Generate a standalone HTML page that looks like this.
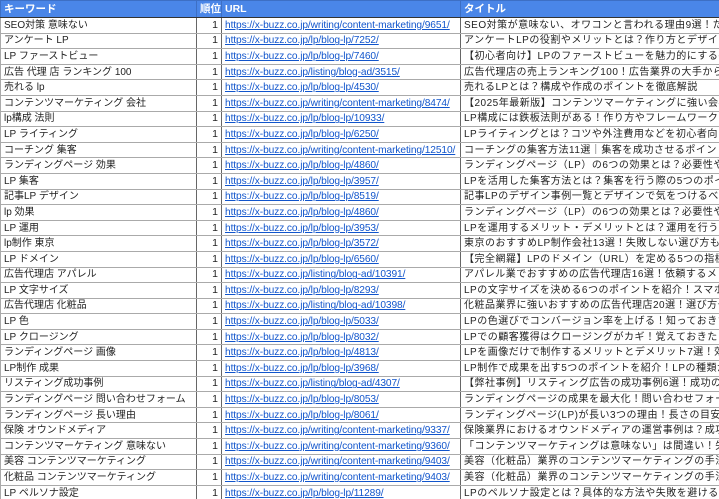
<!DOCTYPE html>
<html><head><meta charset="utf-8"><style>
html,body{margin:0;padding:0;width:719px;height:499px;overflow:hidden;background:#fff}
table{border-collapse:collapse;table-layout:fixed;width:719px;font-family:"Liberation Sans","Noto Sans CJK JP",sans-serif;font-size:10px;color:#222}
tr{height:15.6px}
tr:first-child{height:17px}
td,th{padding:0 3px;border:1px solid #aaa;white-space:nowrap;overflow:hidden;line-height:13px;vertical-align:middle}
th{background:#4a86e8;color:#fff;text-align:left;font-weight:bold;border-color:#3d6fc4;border-bottom:1px solid #333;font-size:10.5px}
td:nth-child(1){border-right:1px solid #666;font-size:10px}
td:nth-child(2){text-align:right;border-right:1px solid #666;font-size:10.5px}
td:nth-child(3){color:#1155cc;text-decoration:underline;font-size:10.2px;border-right:1px solid #666;letter-spacing:-0.1px}
td:nth-child(4){letter-spacing:0.5px;text-overflow:clip}
</style></head><body>
<table>
<colgroup><col style="width:196px"><col style="width:25px"><col style="width:239px"><col style="width:259px"></colgroup>
<tr><th>キーワード</th><th>順位</th><th>URL</th><th>タイトル</th></tr>
<tr><td>SEO対策 意味ない</td><td>1</td><td>https://x-buzz.co.jp/writing/content-marketing/9651/</td><td>SEO対策が意味ない、オワコンと言われる理由9選！ただし</td></tr>
<tr><td>アンケート LP</td><td>1</td><td>https://x-buzz.co.jp/lp/blog-lp/7252/</td><td>アンケートLPの役割やメリットとは？作り方とデザイン事例</td></tr>
<tr><td>LP ファーストビュー</td><td>1</td><td>https://x-buzz.co.jp/lp/blog-lp/7460/</td><td>【初心者向け】LPのファーストビューを魅力的にする6つの</td></tr>
<tr><td>広告 代理 店 ランキング 100</td><td>1</td><td>https://x-buzz.co.jp/listing/blog-ad/3515/</td><td>広告代理店の売上ランキング100！広告業界の大手から最新</td></tr>
<tr><td>売れる lp</td><td>1</td><td>https://x-buzz.co.jp/lp/blog-lp/4530/</td><td>売れるLPとは？構成や作成のポイントを徹底解説</td></tr>
<tr><td>コンテンツマーケティング 会社</td><td>1</td><td>https://x-buzz.co.jp/writing/content-marketing/8474/</td><td>【2025年最新版】コンテンツマーケティングに強い会社2</td></tr>
<tr><td>lp構成 法則</td><td>1</td><td>https://x-buzz.co.jp/lp/blog-lp/10933/</td><td>LP構成には鉄板法則がある！作り方やフレームワークを紹介</td></tr>
<tr><td>LP ライティング</td><td>1</td><td>https://x-buzz.co.jp/lp/blog-lp/6250/</td><td>LPライティングとは？コツや外注費用などを初心者向けに</td></tr>
<tr><td>コーチング 集客</td><td>1</td><td>https://x-buzz.co.jp/writing/content-marketing/12510/</td><td>コーチングの集客方法11選｜集客を成功させるポイントや</td></tr>
<tr><td>ランディングページ 効果</td><td>1</td><td>https://x-buzz.co.jp/lp/blog-lp/4860/</td><td>ランディングページ（LP）の6つの効果とは？必要性や作</td></tr>
<tr><td>LP 集客</td><td>1</td><td>https://x-buzz.co.jp/lp/blog-lp/3957/</td><td>LPを活用した集客方法とは？集客を行う際の5つのポイント</td></tr>
<tr><td>記事LP デザイン</td><td>1</td><td>https://x-buzz.co.jp/lp/blog-lp/8519/</td><td>記事LPのデザイン事例一覧とデザインで気をつけるべきこと</td></tr>
<tr><td>lp 効果</td><td>1</td><td>https://x-buzz.co.jp/lp/blog-lp/4860/</td><td>ランディングページ（LP）の6つの効果とは？必要性や作</td></tr>
<tr><td>LP 運用</td><td>1</td><td>https://x-buzz.co.jp/lp/blog-lp/3953/</td><td>LPを運用するメリット・デメリットとは？運用を行う際の</td></tr>
<tr><td>lp制作 東京</td><td>1</td><td>https://x-buzz.co.jp/lp/blog-lp/3572/</td><td>東京のおすすめLP制作会社13選！失敗しない選び方も</td></tr>
<tr><td>LP ドメイン</td><td>1</td><td>https://x-buzz.co.jp/lp/blog-lp/6560/</td><td>【完全網羅】LPのドメイン（URL）を定める5つの指標！</td></tr>
<tr><td>広告代理店 アパレル</td><td>1</td><td>https://x-buzz.co.jp/listing/blog-ad/10391/</td><td>アパレル業でおすすめの広告代理店16選！依頼するメリット</td></tr>
<tr><td>LP 文字サイズ</td><td>1</td><td>https://x-buzz.co.jp/lp/blog-lp/8293/</td><td>LPの文字サイズを決める6つのポイントを紹介！スマホ対応</td></tr>
<tr><td>広告代理店 化粧品</td><td>1</td><td>https://x-buzz.co.jp/listing/blog-ad/10398/</td><td>化粧品業界に強いおすすめの広告代理店20選！選び方や、</td></tr>
<tr><td>LP 色</td><td>1</td><td>https://x-buzz.co.jp/lp/blog-lp/5033/</td><td>LPの色選びでコンバージョン率を上げる！知っておきたい</td></tr>
<tr><td>LP クロージング</td><td>1</td><td>https://x-buzz.co.jp/lp/blog-lp/8032/</td><td>LPでの顧客獲得はクロージングがカギ！覚えておきたい</td></tr>
<tr><td>ランディングページ 画像</td><td>1</td><td>https://x-buzz.co.jp/lp/blog-lp/4813/</td><td>LPを画像だけで制作するメリットとデメリット7選！効果</td></tr>
<tr><td>LP制作 成果</td><td>1</td><td>https://x-buzz.co.jp/lp/blog-lp/3968/</td><td>LP制作で成果を出す5つのポイントを紹介！LPの種類から</td></tr>
<tr><td>リスティング成功事例</td><td>1</td><td>https://x-buzz.co.jp/listing/blog-ad/4307/</td><td>【弊社事例】リスティング広告の成功事例6選！成功の法則</td></tr>
<tr><td>ランディングページ 問い合わせフォーム</td><td>1</td><td>https://x-buzz.co.jp/lp/blog-lp/8053/</td><td>ランディングページの成果を最大化！問い合わせフォーム</td></tr>
<tr><td>ランディングページ 長い理由</td><td>1</td><td>https://x-buzz.co.jp/lp/blog-lp/8061/</td><td>ランディングページ(LP)が長い3つの理由！長さの目安や</td></tr>
<tr><td>保険 オウンドメディア</td><td>1</td><td>https://x-buzz.co.jp/writing/content-marketing/9337/</td><td>保険業界におけるオウンドメディアの運営事例は？成功</td></tr>
<tr><td>コンテンツマーケティング 意味ない</td><td>1</td><td>https://x-buzz.co.jp/writing/content-marketing/9360/</td><td>「コンテンツマーケティングは意味ない」は間違い！失敗</td></tr>
<tr><td>美容 コンテンツマーケティング</td><td>1</td><td>https://x-buzz.co.jp/writing/content-marketing/9403/</td><td>美容（化粧品）業界のコンテンツマーケティングの手法4</td></tr>
<tr><td>化粧品 コンテンツマーケティング</td><td>1</td><td>https://x-buzz.co.jp/writing/content-marketing/9403/</td><td>美容（化粧品）業界のコンテンツマーケティングの手法4</td></tr>
<tr><td>LP ペルソナ設定</td><td>1</td><td>https://x-buzz.co.jp/lp/blog-lp/11289/</td><td>LPのペルソナ設定とは？具体的な方法や失敗を避けるため</td></tr>
</table>
</body></html>
